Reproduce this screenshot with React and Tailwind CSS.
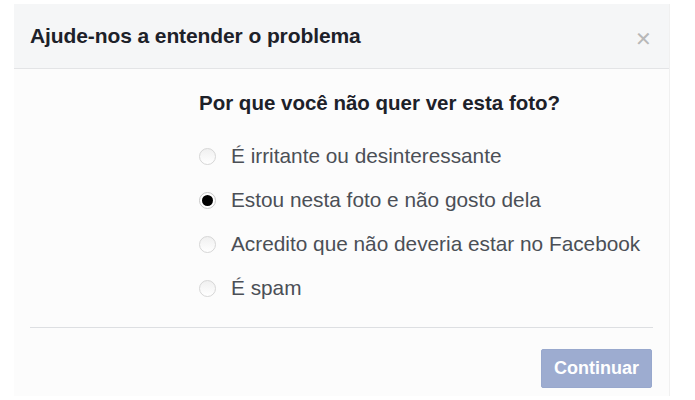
import { useState } from 'react'

const options = [
  'É irritante ou desinteressante',
  'Estou nesta foto e não gosto dela',
  'Acredito que não deveria estar no Facebook',
  'É spam',
]

function Radio({ checked }) {
  if (checked) {
    return (
      <span className="w-[17px] h-[17px] rounded-full border border-[#c8c8c8] bg-white flex items-center justify-center shrink-0">
        <span className="w-[11px] h-[11px] rounded-full bg-black" />
      </span>
    )
  }
  return (
    <span className="w-[17px] h-[17px] rounded-full border border-[#d6d6d6] bg-gradient-to-b from-[#f0f0f0] to-white shrink-0" />
  )
}

export default function App() {
  const [picked, setPicked] = useState(1)

  return (
    <div className="w-[695px] h-[400px] bg-white pt-[4px] pl-[14px] font-['Liberation_Sans',Arial,sans-serif]">
      <div className="w-[656px] h-[392px] bg-[#fcfcfc] border-r border-[#f0f0f0] flex flex-col">
        <div className="h-[65px] bg-[#f5f6f7] border-b border-[#e3e4e6] flex items-center justify-between pl-[16px] pr-[17px]">
          <h2 className="text-[21px] font-bold text-[#1d2129] tracking-[-0.1px]">Ajude-nos a entender o problema</h2>
          <span className="text-[#b8b8b8] text-[20px] leading-none mt-[6px]">✕</span>
        </div>

        <div className="pl-[185px] pt-[20px]">
          <p className="text-[20.5px] leading-[28px] font-bold text-[#1d2129]">Por que você não quer ver esta foto?</p>
          <div className="mt-[28px] flex flex-col gap-[22px]">
            {options.map((o, i) => (
              <label key={o} onClick={() => setPicked(i)} className="flex items-center gap-[15px] cursor-pointer">
                <Radio checked={picked === i} />
                <span className="text-[20.8px] leading-[22px] text-[#4b4f56]">{o}</span>
              </label>
            ))}
          </div>
        </div>

        <div className="mx-[16px] mt-[28px] border-t border-[#dddfe2]" />
        <div className="flex justify-end pr-[17px] pt-[21px]">
          <button className="w-[111px] h-[39px] rounded-[2px] bg-[#9dacd0] border border-[#98a8cd] text-white text-[18px] font-bold">
            Continuar
          </button>
        </div>
      </div>
    </div>
  )
}
